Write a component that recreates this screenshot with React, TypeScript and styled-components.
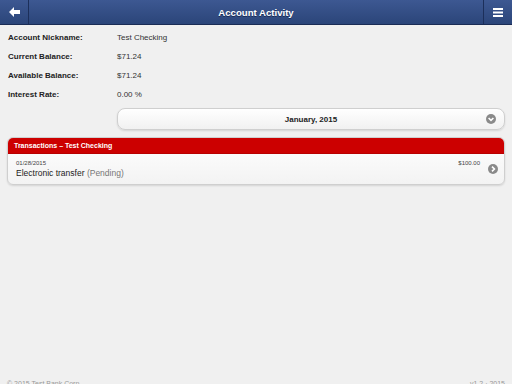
import React, { useState } from 'react';
import styled, { createGlobalStyle } from 'styled-components';

const GlobalStyle = createGlobalStyle`
  html, body {
    margin: 0;
    padding: 0;
    background: #f0f0f0;
    font-family: Helvetica, 'Liberation Sans', Arial, sans-serif;
  }
`;

const details = [
  { label: 'Account Nickname:', value: 'Test Checking' },
  { label: 'Current Balance:', value: '$71.24' },
  { label: 'Available Balance:', value: '$71.24' },
  { label: 'Interest Rate:', value: '0.00 %' },
];

const transactions = [
  { date: '01/28/2015', name: 'Electronic transfer', status: '(Pending)', amount: '$100.00' },
];

const CircleIcon = ({ dir }: { dir: 'down' | 'right' }) => (
  <svg width='10' height='10' viewBox='0 0 10 10'>
    <circle cx='5' cy='5' r='5' fill='#8a8a8a' />
    {dir === 'down' ? (
      <path d='M2.6 4 L5 6.4 L7.4 4' stroke='#fff' strokeWidth='1.6' fill='none' />
    ) : (
      <path d='M4 2.6 L6.4 5 L4 7.4' stroke='#fff' strokeWidth='1.6' fill='none' />
    )}
  </svg>
);

const App = () => {
  const [month] = useState('January, 2015');

  return (
    <Page>
      <GlobalStyle />
      <Header>
        <HeaderButton side='left'>
          <svg width='11' height='10' viewBox='0 0 11 10'>
            <path d='M0 5 L5 0 L5 3 L11 3 L11 7 L5 7 L5 10 Z' fill='#fff' />
          </svg>
        </HeaderButton>
        <Title>Account Activity</Title>
        <HeaderButton side='right'>
          <svg width='10' height='9' viewBox='0 0 10 9'>
            <rect x='0' y='0' width='10' height='2' fill='#fff' />
            <rect x='0' y='3.5' width='10' height='2' fill='#fff' />
            <rect x='0' y='7' width='10' height='2' fill='#fff' />
          </svg>
        </HeaderButton>
      </Header>

      <Content>
        <DetailList>
          {details.map((d) => (
            <DetailRow key={d.label}>
              <Label>{d.label}</Label>
              <Value>{d.value}</Value>
            </DetailRow>
          ))}
        </DetailList>

        <SelectRow>
          <MonthSelect>
            <span>{month}</span>
            <SelectIcon>
              <CircleIcon dir='down' />
            </SelectIcon>
          </MonthSelect>
        </SelectRow>

        <Panel>
          <PanelHeader>Transactions – Test Checking</PanelHeader>
          {transactions.map((t) => (
            <TxRow key={t.date + t.name}>
              <TxInfo>
                <TxDate>{t.date}</TxDate>
                <TxName>
                  {t.name} <Pending>{t.status}</Pending>
                </TxName>
              </TxInfo>
              <TxAmount>{t.amount}</TxAmount>
              <CircleIcon dir='right' />
            </TxRow>
          ))}
        </Panel>
      </Content>

      <Footer>
        <span>© 2015 Test Bank Corp.</span>
        <span>v1.2 · 2015</span>
      </Footer>
    </Page>
  );
};

export default App;

const Page = styled.div`
  width: 512px;
  height: 384px;
  overflow: hidden;
  position: relative;
  background: #f0f0f0;
`;

const Header = styled.div`
  display: flex;
  align-items: center;
  height: 24px;
  background: linear-gradient(#3d5892, #2b4579);
  border-bottom: 1px solid #1a2c55;
`;

const HeaderButton = styled.div<{ side: 'left' | 'right' }>`
  display: flex;
  align-items: center;
  justify-content: center;
  width: 28px;
  height: 24px;
  ${(p) => (p.side === 'left' ? 'border-right' : 'border-left')}: 1px solid #1c2f5a;
`;

const Title = styled.div`
  flex: 1;
  text-align: center;
  color: #fff;
  font-weight: bold;
  font-size: 9.6px;
  text-shadow: 0 1px 0 #1a2c55;
`;

const Content = styled.div`
  padding: 3px 7px 0 7px;
`;

const DetailList = styled.div`
  display: flex;
  flex-direction: column;
`;

const DetailRow = styled.div`
  display: flex;
  align-items: center;
  height: 19px;
  padding-left: 1px;
`;

const Label = styled.div`
  width: 109px;
  font-size: 8px;
  font-weight: bold;
  color: #222;
`;

const Value = styled.div`
  font-size: 8px;
  color: #333;
`;

const SelectRow = styled.div`
  display: flex;
  justify-content: flex-end;
  margin-top: 4px;
`;

const MonthSelect = styled.div`
  position: relative;
  display: flex;
  align-items: center;
  justify-content: center;
  width: 386px;
  height: 20px;
  border: 1px solid #cfcfcf;
  border-radius: 8px;
  background: linear-gradient(#ffffff, #f1f1f1);
  box-shadow: 0 1px 2px rgba(0, 0, 0, 0.12);
  font-size: 8px;
  font-weight: bold;
  color: #222;
`;

const SelectIcon = styled.div`
  position: absolute;
  right: 8px;
  top: 5px;
  display: flex;
`;

const Panel = styled.div`
  margin-top: 7px;
  border: 1px solid #cfcfcf;
  border-radius: 6px;
  overflow: hidden;
  background: linear-gradient(#ffffff, #f3f3f3);
  box-shadow: 0 1px 2px rgba(0, 0, 0, 0.12);
`;

const PanelHeader = styled.div`
  height: 15px;
  line-height: 15px;
  padding-left: 6px;
  background: #cc0000;
  color: #fff;
  font-size: 7px;
  font-weight: bold;
  border-bottom: 1px solid #b80000;
`;

const TxRow = styled.div`
  display: flex;
  align-items: center;
  height: 30px;
  padding: 0 6px 0 8px;
  gap: 8px;
`;

const TxInfo = styled.div`
  flex: 1;
  display: flex;
  flex-direction: column;
  gap: 2px;
`;

const TxDate = styled.div`
  font-size: 6px;
  color: #444;
`;

const TxName = styled.div`
  font-size: 8.5px;
  color: #222;
`;

const Pending = styled.span`
  color: #777;
`;

const TxAmount = styled.div`
  align-self: flex-start;
  margin-top: 6px;
  font-size: 6px;
  color: #444;
`;

const Footer = styled.div`
  position: absolute;
  left: 0;
  right: 0;
  top: 380px;
  display: flex;
  justify-content: space-between;
  padding: 0 7px;
  font-size: 7px;
  color: #999;
`;
